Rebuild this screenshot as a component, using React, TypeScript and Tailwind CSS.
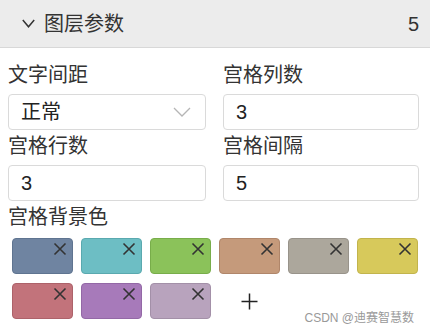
import React from "react";

const font = { fontFamily: '"Liberation Sans", "Noto Sans CJK SC", sans-serif' };

const colors = [
  ["#6f84a1", "#5f7490"],
  ["#6dbec4", "#5aa9af"],
  ["#8bc25a", "#78ad4a"],
  ["#c59a7b", "#b0866a"],
  ["#aca79c", "#98938a"],
  ["#d7c95b", "#c2b44c"],
  ["#c2737b", "#ad626a"],
  ["#a77aba", "#9368a6"],
  ["#b8a3bd", "#a390a8"],
];

function Swatch({ bg, border }: { bg: string; border: string }) {
  return (
    <div
      className="relative h-[36px] w-[61px] rounded-[4px] border"
      style={{ backgroundColor: bg, borderColor: border }}
    >
      <svg className="absolute right-[5px] top-[3px]" width="14" height="14" viewBox="0 0 14 14">
        <path d="M1.5 1.5 L12.5 12.5 M12.5 1.5 L1.5 12.5" stroke="#333" strokeWidth="1.6" fill="none" />
      </svg>
    </div>
  );
}

function Field({ label, value, select }: { label: string; value: string; select?: boolean }) {
  return (
    <div className="flex flex-col">
      <div className="h-[28px] text-[20px] leading-[28px] text-[#333]">{label}</div>
      <div className="mt-[5px] flex h-[36px] items-center justify-between rounded-[4px] border-[1.5px] border-[#dadada] bg-white pl-[12px] pr-[14px] text-[20px] text-[#222]">
        <span>{value}</span>
        {select && (
          <svg width="18" height="12" viewBox="0 0 18 12">
            <path d="M1 2 L9 10 L17 2" stroke="#b5b5b5" strokeWidth="1.3" fill="none" />
          </svg>
        )}
      </div>
    </div>
  );
}

export default function App() {
  return (
    <div className="relative h-[332px] w-[430px] overflow-hidden bg-white" style={font}>
      <div className="flex h-[48px] items-center justify-between border-b-[1.5px] border-[#d8d8d8] bg-[#ececec] pl-[22px] pr-[11px]">
        <div className="flex items-center">
          <svg width="13" height="9" viewBox="0 0 13 9">
            <path d="M0.8 1 L6.5 7.8 L12.2 1" stroke="#333" strokeWidth="1.5" fill="none" />
          </svg>
          <span className="ml-[9px] text-[20px] text-[#333]">图层参数</span>
        </div>
        <span className="text-[20px] text-[#333]">5</span>
      </div>
      <div className="pl-[8px] pr-[11px] pt-[13px]">
        <div className="grid grid-cols-[198px_196px] gap-x-[17px] gap-y-[2px]">
          <Field label="文字间距" value="正常" select />
          <Field label="宫格列数" value="3" />
          <div className="-mt-[0px]">
            <Field label="宫格行数" value="3" />
          </div>
          <Field label="宫格间隔" value="5" />
        </div>
        <div className="mt-[2px] h-[28px] text-[20px] leading-[28px] text-[#333]">宫格背景色</div>
        <div className="mt-[7px] grid grid-cols-[repeat(6,61px)] gap-x-[8px] gap-y-[9px] pl-[4px]">
          {colors.map(([bg, b], i) => (
            <Swatch key={i} bg={bg} border={b} />
          ))}
          <div className="flex h-[36px] w-[61px] items-center justify-center">
            <svg width="17" height="17" viewBox="0 0 17 17">
              <path d="M8.5 0.5 V16.5 M0.5 8.5 H16.5" stroke="#222" strokeWidth="1.5" fill="none" />
            </svg>
          </div>
        </div>
      </div>
      <div className="absolute bottom-[6px] right-[14px] bg-white/70 px-[2px] text-[12px] leading-[16px] text-[#999]">
        CSDN @迪赛智慧数
      </div>
    </div>
  );
}
